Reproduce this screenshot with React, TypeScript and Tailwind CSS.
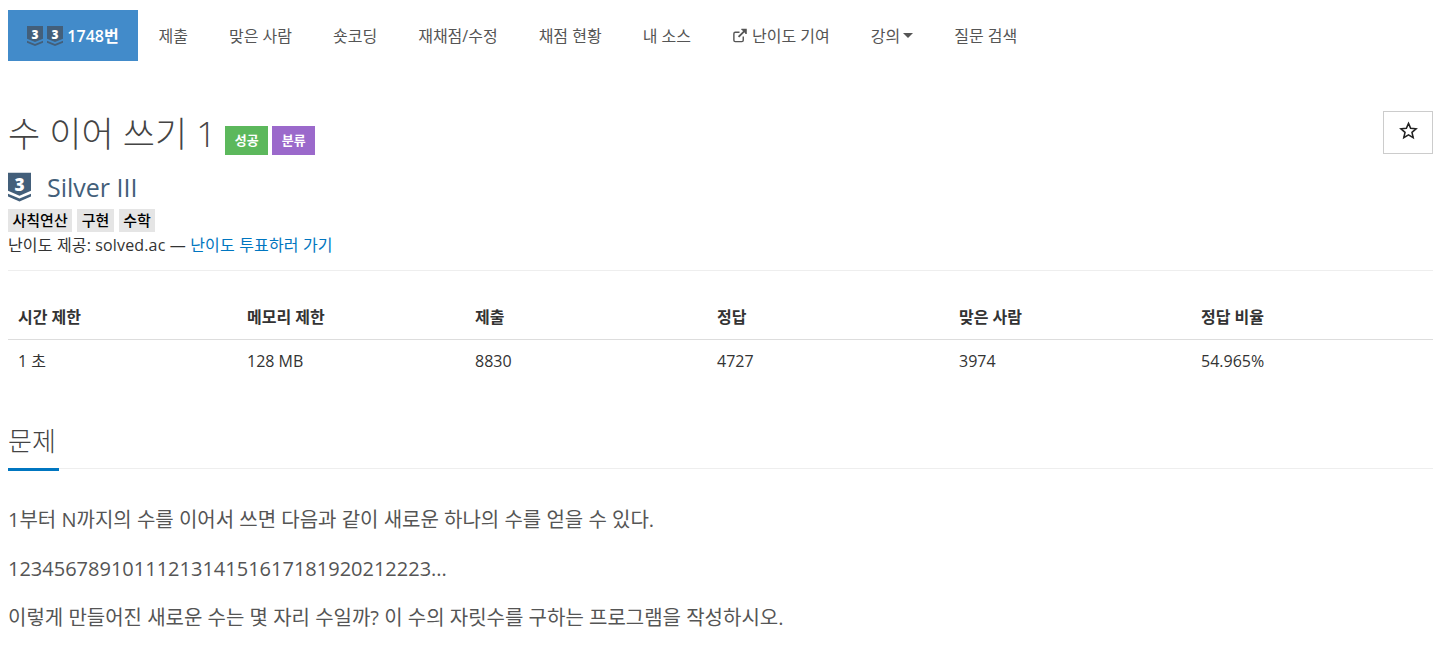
const FONT = 'font-["Open_Sans","Noto_Sans_CJK_KR",sans-serif]';

const NAV_ITEMS = ['제출', '맞은 사람', '숏코딩', '재채점/수정', '채점 현황', '내 소스'];

const STATS = [
  { label: '시간 제한', value: '1 초', width: 'w-[229px]' },
  { label: '메모리 제한', value: '128 MB', width: 'w-[228px]' },
  { label: '제출', value: '8830', width: 'w-[242px]' },
  { label: '정답', value: '4727', width: 'w-[242px]' },
  { label: '맞은 사람', value: '3974', width: 'w-[242px]' },
  { label: '정답 비율', value: '54.965%', width: 'flex-1' },
];

function TierBadge({ className }: { className: string }) {
  return (
    <svg viewBox="0 0 24 30" className={className}>
      <path d="M0 0H24V19L12 24L0 19Z" fill="#435f7a" />
      <path d="M0 22L12 27L24 22V25L12 30L0 25Z" fill="#435f7a" />
      <text x="12" y="19" textAnchor="middle" fontSize="18" fontWeight="800" fill="#fff" fontFamily="Open Sans">
        3
      </text>
    </svg>
  );
}

function NavLink({ children }: { children: React.ReactNode }) {
  return <a className="flex h-full items-center px-[20.5px] text-[16px] text-[#555]">{children}</a>;
}

export default function App() {
  return (
    <div className={`${FONT} min-h-[656px] overflow-hidden bg-white pl-2 pr-5 pt-2.5 text-[#333]`}>
      <nav className="flex h-[51px] items-center">
        <a className="flex h-full w-[130px] items-center justify-center gap-[4px] bg-[#428bca] text-[16px] font-semibold text-white">
          <TierBadge className="h-[20px] w-[16px]" />
          <TierBadge className="h-[20px] w-[16px]" />
          <span>1748번</span>
        </a>
        {NAV_ITEMS.map((item) => (
          <NavLink key={item}>{item}</NavLink>
        ))}
        <NavLink>
          <svg viewBox="0 0 16 16" className="mr-[5px] h-[15px] w-[15px]" fill="none" stroke="#555" strokeWidth="1.5">
            <path d="M12 9v4a1.5 1.5 0 0 1-1.5 1.5h-7A1.5 1.5 0 0 1 2 13V6a1.5 1.5 0 0 1 1.5-1.5H8" />
            <path d="M10 1.5h5v5" fill="#555" />
            <path d="M14.5 2L7 9.5" strokeWidth="2" />
          </svg>
          난이도 기여
        </NavLink>
        <NavLink>
          강의
          <span className="ml-[3px] h-0 w-0 border-x-[5px] border-t-[5px] border-x-transparent border-t-[#555]" />
        </NavLink>
        <NavLink>질문 검색</NavLink>
      </nav>

      <div className="mt-[50px] flex items-start justify-between">
        <div className="flex items-center">
          <h1 className="text-[35px] leading-[46px] font-light text-[#444]">수 이어 쓰기 1</h1>
          <span className="ml-[9px] mt-[13px] flex h-[29px] w-[43px] items-center justify-center bg-[#5cb85c] text-[13px] font-bold text-white">
            성공
          </span>
          <span className="ml-[4px] mt-[13px] flex h-[29px] w-[43px] items-center justify-center bg-[#9b69cb] text-[13px] font-bold text-white">
            분류
          </span>
        </div>
        <button className="flex h-[43px] w-[50px] items-center justify-center border border-[#ccc] bg-white pb-[4px]">
          <svg viewBox="0 0 24 24" className="h-[19px] w-[19px]" fill="none" stroke="#222" strokeWidth="2">
            <path d="M12 3l2.7 6.2 6.8.6-5.1 4.5 1.5 6.7-5.9-3.5L6.1 21l1.5-6.7L2.5 9.8l6.8-.6z" />
          </svg>
        </button>
      </div>

      <div className="mt-[14px] flex h-[32px] items-center">
        <TierBadge className="h-[30px] w-[23px]" />
        <span className="ml-[16px] mt-[2px] text-[25px] text-[#435f7a]">Silver III</span>
      </div>
      <div className="mt-[6px] flex gap-[5px]">
        {['사칙연산', '구현', '수학'].map((tag) => (
          <span key={tag} className="flex h-[23px] items-center bg-[#e5e5e5] px-[4.5px] text-[15px] font-medium text-black">
            {tag}
          </span>
        ))}
      </div>
      <p className="mt-[1px] text-[16px] leading-[24px] tracking-[0.15px] text-[#333]">
        난이도 제공: solved.ac — <a className="text-[#0076c0]">난이도 투표하러 가기</a>
      </p>

      <hr className="mt-[13px] border-[#eee]" />

      <div className="mt-[23px] flex h-[46px] items-center border-b border-[#ddd] text-[16px] font-bold text-[#333]">
        {STATS.map((stat) => (
          <div key={stat.label} className={`${stat.width} px-2.5`}>
            {stat.label}
          </div>
        ))}
      </div>
      <div className="flex h-[42px] items-center text-[16px] text-[#333]">
        {STATS.map((stat) => (
          <div key={stat.label} className={`${stat.width} px-2.5`}>
            {stat.value}
          </div>
        ))}
      </div>

      <div className="mt-[40px] border-b border-[#eee]">
        <h2 className="-mb-[3px] w-[51px] border-b-[3px] border-[#0076c0] pb-[8px] text-[26px] leading-[38px] font-light whitespace-nowrap text-[#444]">
          문제
        </h2>
      </div>

      <div className="mt-[36px] text-[20px] leading-[30px] text-[#555]">
        <p>1부터 N까지의 수를 이어서 쓰면 다음과 같이 새로운 하나의 수를 얻을 수 있다.</p>
        <p className="mt-[19px]">1234567891011121314151617181920212223...</p>
        <p className="mt-[19px]">이렇게 만들어진 새로운 수는 몇 자리 수일까? 이 수의 자릿수를 구하는 프로그램을 작성하시오.</p>
      </div>
    </div>
  );
}
